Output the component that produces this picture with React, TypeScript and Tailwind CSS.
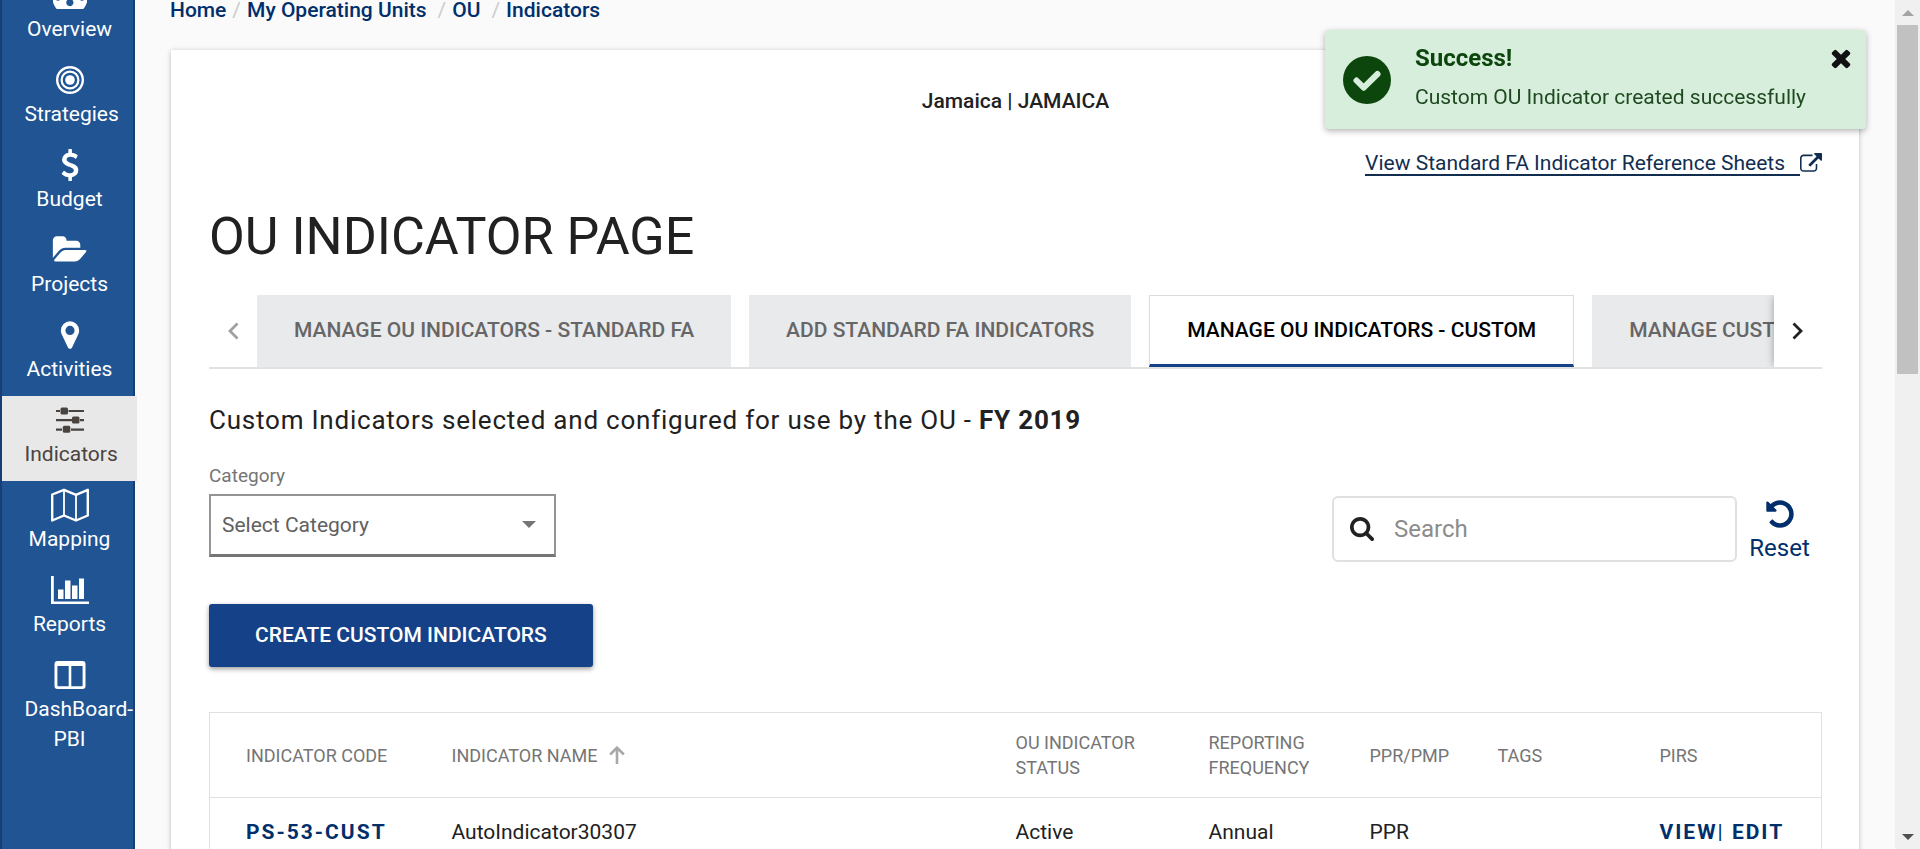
import type { ReactNode } from 'react';

type IconProps = { d: string; className: string; viewBox?: string };

function Glyph({ d, className, viewBox = '0 0 1792 1792' }: IconProps) {
  return (
    <svg viewBox={viewBox} className={className} fill="currentColor" aria-hidden="true">
      <path d={d} />
    </svg>
  );
}

const paths = {
  dollar:
    'M1362 1185q0 153-99.500 263.500t-258.500 136.500v175q0 14-9 23t-23 9h-135q-13 0-22.500-9.500t-9.500-22.500v-175q-66-9-127.500-31t-101.500-44.500-74-48-46.500-37.500-17.500-18q-17-21-2-41l103-135q7-10 23-12 15-2 24 9l2 2q113 99 243 125 37 8 74 8 81 0 142.500-43t61.500-122q0-28-15-53t-33.500-42-58.500-37.500-66-32-80-32.500q-39-16-61.500-25t-61.500-26.500-62.500-31-56.500-35.500-53.500-42.500-43.500-49-35.500-58-21-66.500-8.500-78q0-138 98-242t255-134v-180q0-13 9.500-22.500t22.500-9.500h135q14 0 23 9t9 23v176q57 6 110.500 23t87 33.500 63.500 37.500 39 29 15 14q17 18 5 38l-81 146q-8 15-23 16-14 3-27-7-3-3-14.500-12t-39-26.500-58.500-32-74.500-26-85.500-11.500q-95 0-155 43t-60 111q0 26 8.500 48t29.500 41.500 39.500 33 56 31 60.500 27 70 27.500q53 20 81 31.500t76 35 75.500 42.500 62 50 53 63.500 31.500 76.500 13 94z',
  folder:
    'M1879 952q0 31-31 66l-336 396q-43 51-120.500 86.500t-143.500 35.500h-1088q-34 0-60.500-13t-26.500-43q0-31 31-66l336-396q43-51 120.500-86.500t143.500-35.500h1088q34 0 60.500 13t26.500 43zm-343-344v160h-832q-94 0-197 47.500t-164 119.500l-337 396-5 6q0-4-.5-12.500t-.5-12.500v-960q0-92 66-158t158-66h320q92 0 158 66t66 158v32h544q92 0 158 66t66 158z',
  marker:
    'M1152 640q0-106-75-181t-181-75-181 75-75 181 75 181 181 75 181-75 75-181zm256 0q0 109-33 179l-364 774q-16 33-47.500 52t-67.500 19-67.500-19-46.500-52l-365-774q-33-70-33-179 0-212 150-362t362-150 362 150 150 362z',
  close:
    'M1490 1322q0 40-28 68l-136 136q-28 28-68 28t-68-28l-294-294-294 294q-28 28-68 28t-68-28l-136-136q-28-28-28-68t28-68l294-294-294-294q-28-28-28-68t28-68l136-136q28-28 68-28t68 28l294 294 294-294q28-28 68-28t68 28l136 136q28 28 28 68t-28 68l-294 294 294 294q28 28 28 68z',
  search:
    'M1216 832q0-185-131.500-316.500t-316.500-131.500-316.500 131.500-131.500 316.500 131.500 316.500 316.500 131.500 316.500-131.500 131.500-316.500zm512 832q0 52-38 90t-90 38q-54 0-90-38l-343-342q-179 124-399 124-143 0-273.500-55.500t-225-150-150-225-55.500-273.500 55.500-273.500 150-225 225-150 273.500-55.500 273.500 55.500 225 150 150 225 55.500 273.500q0 220-124 399l343 343q37 37 37 90z',
  undo:
    'M1664 896q0 156-61 298t-164 245-245 164-298 61q-172 0-327-72.500t-264-204.500q-7-10-6.500-22.500t8.500-20.500l137-138q10-9 25-9 16 2 23 12 73 95 179 147t225 52q104 0 198.500-40.500t163.500-109.500 109.500-163.500 40.500-198.500-40.500-198.500-109.500-163.500-163.500-109.500-198.500-40.500q-98 0-188 35.500t-160 101.500l137 138q31 30 14 69-17 40-59 40h-448q-26 0-45-19t-19-45v-448q0-42 40-59 39-17 69 14l130 129q107-101 244.500-156.500t284.500-55.500q156 0 298 61t245 164 164 245 61 298z',
  external:
    'M1408 928v320q0 119-84.500 203.500t-203.500 84.500h-832q-119 0-203.500-84.500t-84.500-203.500v-832q0-119 84.500-203.500t203.500-84.500h704q14 0 23 9t9 23v64q0 14-9 23t-23 9h-704q-66 0-113 47t-47 113v832q0 66 47 113t113 47h832q66 0 113-47t47-113v-320q0-14 9-23t23-9h64q14 0 23 9t9 23zm384-864v512q0 26-19 45t-45 19-45-19l-176-176-652 652q-10 10-23 10t-23-10l-114-114q-10-10-10-23t10-23l652-652-176-176q-19-19-19-45t19-45 45-19h512q26 0 45 19t19 45z',
};

const navItems: { label: string; icon: ReactNode; active?: boolean }[] = [
  {
    label: 'Overview',
    icon: (
      <svg viewBox="0 0 34 28" className="h-7 w-[34px]" fill="currentColor" aria-hidden="true">
        <path
          fillRule="evenodd"
          d="M17 0a17 17 0 0 0-14.500 26.500q.8 1.500 2 1.500h25q1.200 0 2-1.500A17 17 0 0 0 17 0zM5 15a2.400 2.400 0 1 1 0 4.800a2.400 2.400 0 1 1 0-4.800zM29 15a2.400 2.400 0 1 1 0 4.800a2.400 2.400 0 1 1 0-4.800zM18.500 10l1.800.6-1.500 7.900a3.600 3.600 0 1 1-2.600-.5z"
        />
      </svg>
    ),
  },
  {
    label: 'Strategies',
    icon: (
      <svg viewBox="0 0 28 28" className="size-7" fill="none" stroke="currentColor" aria-hidden="true">
        <circle cx="14" cy="14" r="12.800" strokeWidth="2.400" />
        <circle cx="14" cy="14" r="8.400" strokeWidth="2.200" />
        <circle cx="14" cy="14" r="4.800" fill="currentColor" stroke="none" />
      </svg>
    ),
  },
  { label: 'Budget', icon: <Glyph d={paths.dollar} className="size-8" /> },
  { label: 'Projects', icon: <Glyph d={paths.folder} viewBox="0 0 1920 1792" className="h-8 w-9" /> },
  { label: 'Activities', icon: <Glyph d={paths.marker} className="size-8" /> },
  {
    label: 'Indicators',
    active: true,
    icon: (
      <svg viewBox="0 0 28 26" className="h-[26px] w-7" fill="currentColor" aria-hidden="true">
        <path d="M0 3h4v2H0zM12.500 3H28v2H12.500zM0 12h16v2.200H0zM24 12h4v2.200h-4zM0 21.500h6v2.200H0zM15 21.500h13v2.200H15z" />
        <rect x="4.500" y="0.500" width="7.500" height="7" rx="1.500" />
        <rect x="16" y="9.600" width="7.500" height="7" rx="1.500" />
        <rect x="6.800" y="18.800" width="7.500" height="7" rx="1.500" />
      </svg>
    ),
  },
  {
    label: 'Mapping',
    icon: (
      <svg viewBox="0 0 38 34" className="h-[34px] w-[38px]" fill="none" stroke="currentColor" aria-hidden="true">
        <path strokeWidth="2.400" strokeLinejoin="round" d="M1.200 6.500L13 1.800l12 5L36.800 1.800v25.700L25 32.500l-12-5-11.800 5z" />
        <path strokeWidth="1.800" d="M13 2v25.500M25 7v25.500" />
      </svg>
    ),
  },
  {
    label: 'Reports',
    icon: (
      <svg viewBox="0 0 38 28" className="h-7 w-[38px]" fill="currentColor" aria-hidden="true">
        <path d="M0 0h2.800v25.600H38V28H0zM7 13.500h5.500v9.500H7zM14 4.500h5.500V23H14zM21 9.500h5.500V23H21zM28 2.500h5V23h-5z" />
      </svg>
    ),
  },
  {
    label: 'DashBoard-PBI',
    icon: (
      <svg viewBox="0 0 32 28" className="h-7 w-8" fill="currentColor" aria-hidden="true">
        <path
          fillRule="evenodd"
          d="M3.500 0h25A3 3 0 0 1 31.500 3v22a3 3 0 0 1-3 3h-25a3 3 0 0 1-3-3V3a3 3 0 0 1 3-3zM3.400 5v19.500q0 .8.800.8h10.500V5zM17.300 5v20.300h10.500q.8 0 .8-.8V5z"
        />
      </svg>
    ),
  },
];

function Sidebar() {
  return (
    <nav
      aria-label="Main"
      className="z-10 -mt-[29px] w-[135px] shrink-0 border-x-2 border-[#173f73] bg-[#205493] text-[21px] leading-[30px] text-white"
    >
      <ul>
        {navItems.map((item) => (
          <li key={item.label}>
            <a
              href="#"
              aria-current={item.active ? 'page' : undefined}
              className={
                item.active
                  ? 'flex min-h-[85px] w-[135px] flex-col items-center bg-[#e8e8e8] text-[#494440]'
                  : 'flex min-h-[85px] w-[135px] flex-col items-center'
              }
            >
              <span className="flex h-[43px] items-center pt-1">{item.icon}</span>
              <span className="w-[90px] text-center">{item.label}</span>
            </a>
          </li>
        ))}
      </ul>
    </nav>
  );
}

const crumbs = ['Home', 'My Operating Units', 'OU', 'Indicators'];

function Breadcrumb() {
  return (
    <nav aria-label="Breadcrumb" className="px-[35px] text-[21px] leading-5 font-medium text-[#002f6c]">
      <ol className="flex">
        {crumbs.map((crumb, i) => (
          <li key={crumb} className="flex">
            {i > 0 && <span className={i > 1 ? 'mr-1.5 ml-[11px] font-normal text-[#ccc]' : 'mx-1.5 font-normal text-[#ccc]'}>/</span>}
            <a href="#">{crumb}</a>
          </li>
        ))}
      </ol>
    </nav>
  );
}

const tabs = [
  { label: 'MANAGE OU INDICATORS - STANDARD FA' },
  { label: 'ADD STANDARD FA INDICATORS' },
  { label: 'MANAGE OU INDICATORS - CUSTOM', active: true },
  { label: 'MANAGE CUSTOM INDICATORS' },
];

function Chevron({ left }: { left?: boolean }) {
  return (
    <svg viewBox="0 0 12 18" className="h-[18px] w-3" fill="none" stroke="currentColor" strokeWidth="2.800" aria-hidden="true">
      <path d={left ? 'M10.500 1.500L3 9l7.500 7.500' : 'M1.500 1.500L9 9l-7.500 7.500'} />
    </svg>
  );
}

function TabBar() {
  return (
    <div className="mt-7 flex h-[74px] border-b-2 border-[#e2e2e2]">
      <button type="button" aria-label="Previous tabs" className="flex w-12 shrink-0 items-center justify-center text-[#a0a0a0]">
        <Chevron left />
      </button>
      <div role="tablist" className="flex min-w-0 flex-1 gap-[18px] overflow-hidden">
        {tabs.map((tab) => (
          <button
            key={tab.label}
            type="button"
            role="tab"
            aria-selected={!!tab.active}
            className={
              tab.active
                ? 'shrink-0 border border-b-[3px] border-[#dcdcdc] border-b-[#164186] bg-white px-[37px] pt-0.5 text-[21px] font-medium text-black'
                : 'shrink-0 bg-[#e9eaec] px-[37px] text-[21px] font-medium text-[#666]'
            }
          >
            {tab.label}
          </button>
        ))}
      </div>
      <button
        type="button"
        aria-label="Next tabs"
        className="z-10 flex w-12 shrink-0 items-center justify-center bg-white text-[#212121] shadow-[-2px_0_8px_-2px_rgba(0,0,0,0.35)] [clip-path:inset(0_0_0_-12px)]"
      >
        <Chevron />
      </button>
    </div>
  );
}

function Filters() {
  return (
    <div className="mt-[27px] flex items-start justify-between">
      <div>
        <label htmlFor="category" className="block text-[19px] leading-[22px] text-[#757575]">
          Category
        </label>
        <div className="relative mt-[7px] w-[347px]">
          <select
            id="category"
            className="h-[63px] w-full appearance-none border-2 border-b-[3px] border-[#949494] border-b-[#757575] bg-white pt-0.5 pr-10 pl-[11px] text-[21px] text-[#616161]"
          >
            <option>Select Category</option>
          </select>
          <svg viewBox="0 0 14 7" className="pointer-events-none absolute top-[27px] right-5 h-[7px] w-3.5" fill="#757575" aria-hidden="true">
            <path d="M0 0h14L7 7z" />
          </svg>
        </div>
      </div>
      <div className="mt-[31px] flex">
        <label className="flex h-[66px] w-[405px] items-center gap-5 rounded-md border-2 border-[#e0e0e0] pl-4 text-[#212121]">
          <Glyph d={paths.search} className="size-6 shrink-0" viewBox="64 128 1664 1664" />
          <input type="search" aria-label="Search" placeholder="Search" className="w-full min-w-0 bg-transparent text-2xl outline-none placeholder:text-[#8c8c8c]" />
        </label>
        <button type="button" className="flex w-[85px] flex-col items-center pt-0.5 text-2xl leading-9 text-[#002f6c]">
          <Glyph d={paths.undo} className="size-8" />
          Reset
        </button>
      </div>
    </div>
  );
}

function IndicatorTable() {
  return (
    <table className="mt-[45px] w-full table-fixed border border-[#e0e0e0] text-left text-[21px] text-[#212121]">
      <colgroup>
        <col className="w-[223px]" />
        <col />
        <col className="w-[193px]" />
        <col className="w-[161px]" />
        <col className="w-[128px]" />
        <col className="w-[162px]" />
        <col className="w-[181px]" />
      </colgroup>
      <thead>
        <tr className="h-[85px] border-b border-[#e0e0e0] text-lg leading-[25px] text-[#757575] [&>th]:font-normal">
          <th className="pl-9">INDICATOR CODE</th>
          <th className="pl-[19px]">
            <span className="flex items-center gap-3">
              INDICATOR NAME
              <svg viewBox="0 0 16 18" className="h-[18px] w-4" fill="none" stroke="#a8a8a8" strokeWidth="2.600" aria-hidden="true">
                <path d="M8 18V2M1.200 8.500L8 1.700l6.800 6.800" />
              </svg>
            </span>
          </th>
          <th className="pr-12 pl-[19px]">OU INDICATOR STATUS</th>
          <th className="pr-4 pl-[19px]">REPORTING FREQUENCY</th>
          <th className="pl-[19px]">PPR/PMP</th>
          <th className="pl-[19px]">TAGS</th>
          <th className="pl-[19px]">PIRS</th>
        </tr>
      </thead>
      <tbody>
        <tr className="h-[70px] border-b border-[#e0e0e0] [&_a]:font-bold [&_a]:tracking-[2px]">
          <td className="pl-9 text-[#002f6c]">
            <a href="#">PS-53-CUST</a>
          </td>
          <td className="pl-[19px]">AutoIndicator30307</td>
          <td className="pl-[19px]">Active</td>
          <td className="pl-[19px]">Annual</td>
          <td className="pl-[19px]">PPR</td>
          <td />
          <td className="pl-[19px] tracking-[2px] whitespace-nowrap text-[#002f6c]">
            <a href="#">VIEW</a>| <a href="#">EDIT</a>
          </td>
        </tr>
      </tbody>
    </table>
  );
}

function Toast() {
  return (
    <div
      role="status"
      className="fixed top-[30px] right-[54px] z-20 flex h-[99px] w-[541px] items-center rounded-sm bg-[#d7eedc] pr-[11px] pl-[18px] shadow-[0_2px_6px_rgba(0,0,0,0.3)]"
    >
      <svg viewBox="0 0 48 48" className="size-12 shrink-0" aria-hidden="true">
        <circle cx="24" cy="24" r="24" fill="#0d460d" />
        <path d="M13.500 24.500l7.200 7.200L34.500 18" fill="none" stroke="#d7eedc" strokeWidth="6" strokeLinecap="round" strokeLinejoin="round" />
      </svg>
      <div className="ml-6 flex-1 self-start pt-3">
        <p className="text-2xl leading-8 font-bold text-[#0d460d]">Success!</p>
        <p className="mt-2 text-[21px] leading-[30px] text-[#1f4a20]">Custom OU Indicator created successfully</p>
      </div>
      <button type="button" aria-label="Close" className="self-start pt-3.5 text-[#111]">
        <Glyph d={paths.close} className="size-7" />
      </button>
    </div>
  );
}

function ScrollBar() {
  return (
    <div aria-hidden="true" className="flex w-[25px] shrink-0 flex-col items-center bg-[#f0f0f0] px-0.5">
      <div className="flex h-[25px] items-center">
        <svg viewBox="0 0 12 6" className="h-1.5 w-3" fill="#a3a3a3">
          <path d="M0 6L6 0l6 6z" />
        </svg>
      </div>
      <div className="h-[349px] w-full bg-[#c1c1c1]" />
      <div className="mt-auto flex h-[25px] items-center">
        <svg viewBox="0 0 12 6" className="h-1.5 w-3" fill="#505050">
          <path d="M0 0l6 6 6-6z" />
        </svg>
      </div>
    </div>
  );
}

export default function App() {
  return (
    <div className="flex h-screen overflow-hidden bg-[#fafafa] font-['Roboto',sans-serif] text-[#212121]">
      <Sidebar />
      <div className="min-w-0 flex-1">
        <Breadcrumb />
        <main className="mx-9 mt-[30px] bg-white pt-9 pr-[37px] pb-12 pl-[38px] shadow-[0_1px_5px_rgba(0,0,0,0.25)]">
          <p className="text-center text-[21px] leading-[30px] font-medium">Jamaica | JAMAICA</p>
          <div className="mt-9 flex justify-end">
            <a href="#" className="flex items-center text-[21px] leading-[30px] text-[#112e51]">
              <span className="border-b-2 border-[#112e51] pr-[15px] leading-[22px]">View Standard FA Indicator Reference Sheets</span>
              <Glyph d={paths.external} className="size-[22px]" />
            </a>
          </div>
          <h1 className="mt-[31px] text-[52px] leading-[60px]">OU INDICATOR PAGE</h1>
          <TabBar />
          <h2 className="mt-[33px] text-[26px] leading-9 tracking-[0.03em]">
            Custom Indicators selected and configured for use by the OU - <strong>FY 2019</strong>
          </h2>
          <Filters />
          <button
            type="button"
            className="mt-[38px] h-[63px] rounded-[3px] bg-[#154188] px-[46px] text-[21px] font-medium text-white shadow-[0_2px_5px_rgba(0,0,0,0.4)]"
          >
            CREATE CUSTOM INDICATORS
          </button>
          <IndicatorTable />
        </main>
      </div>
      <ScrollBar />
      <Toast />
    </div>
  );
}
